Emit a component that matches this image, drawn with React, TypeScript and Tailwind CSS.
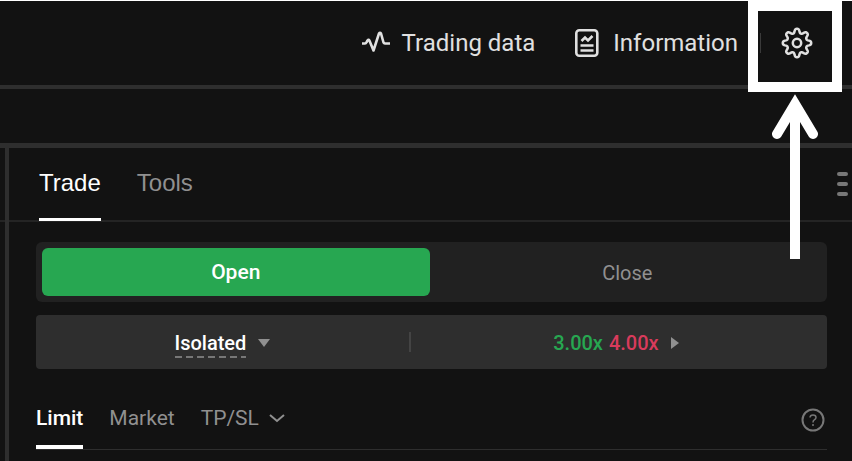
import { useState } from 'react';

const ORDER_TYPES = ['Limit', 'Market', 'TP/SL'];

// Wavy outline of the settings gear, eight rounded teeth
const gearPath = () => {
  const points: string[] = [];
  for (let i = 0; i < 160; i++) {
    const angle = (i / 160) * Math.PI * 2;
    const wave = Math.cos(angle * 8);
    const radius = 12.2 + 2.2 * Math.tanh(wave * 1.5);
    points.push(`${(16 + radius * Math.cos(angle)).toFixed(2)} ${(16 + radius * Math.sin(angle)).toFixed(2)}`);
  }
  return `M${points.join('L')}Z`;
};

function PulseIcon() {
  return (
    <svg width="28" height="24" viewBox="0 0 28 24" fill="none" stroke="currentColor" strokeWidth="2.6" strokeLinejoin="round">
      <path d="M0 12.500H3Q4 12.500 4.500 11.300L5.500 9.500Q6.700 8 7.600 10L11.500 19.500L17 2.500Q18 1 19 2.500L21.500 11.500Q21.900 12.500 23 12.500H28" />
    </svg>
  );
}

function ReportIcon() {
  return (
    <svg width="24" height="28" viewBox="0 0 24 28" fill="none" stroke="currentColor" strokeWidth="2.6">
      <rect x="1.300" y="1.300" width="21" height="25.400" rx="3" />
      <path d="M6.500 12L10 8.500L13 11.500L17.500 7" />
      <path d="M5.500 16.500H18.500M5.500 21.500H18.500" />
    </svg>
  );
}

function GearIcon() {
  return (
    <svg width="32" height="32" viewBox="0 0 32 32" fill="none" stroke="currentColor" strokeWidth="2.5" strokeLinejoin="round">
      <path d={gearPath()} />
      <circle cx="16" cy="16" r="4.200" />
    </svg>
  );
}

function Header() {
  return (
    <header className="flex h-[89px] items-center justify-end border-t border-b-4 border-t-white border-b-[#2e2e2e] pr-[39px] pb-px text-2xl text-[#e0e0e0]">
      <a href="#trading-data" className="flex items-center gap-3">
        <PulseIcon />
        Trading data
      </a>
      <a href="#information" className="ml-10 flex items-center gap-3.5">
        <ReportIcon />
        Information
      </a>
      <span className="ml-[22px] h-5 w-px bg-[#3a3a3a]" />
      <button type="button" aria-label="Settings" className="ml-5">
        <GearIcon />
      </button>
    </header>
  );
}

function PanelTabs() {
  return (
    <div className="flex h-[74px] items-stretch border-b-2 border-[#242424] pr-1 pl-[30px] font-['Liberation_Sans',Arial,sans-serif] text-2xl">
      <button type="button" className="-mb-px border-b-3 border-white text-white">Trade</button>
      <button type="button" className="ml-9 -mb-px border-b-3 border-transparent text-[#909090]">Tools</button>
      <button type="button" aria-label="Panel menu" className="ml-auto flex flex-col justify-center gap-1.5">
        <span className="h-1 w-[11px] rounded-xs bg-[#777]" />
        <span className="h-1 w-[11px] rounded-xs bg-[#777]" />
        <span className="h-1 w-[11px] rounded-xs bg-[#777]" />
      </button>
    </div>
  );
}

function OrderPanel() {
  const [side, setSide] = useState('Open');
  const [orderType, setOrderType] = useState('Limit');

  return (
    <div className="pt-5 pr-[25px] pl-[27px] text-[21px]">
      <div className="grid h-[60px] grid-cols-2 gap-1 rounded-md bg-[#212121] p-1.5">
        {['Open', 'Close'].map(name => (
          <button
            key={name}
            type="button"
            onClick={() => setSide(name)}
            className={side === name ? 'rounded-md bg-[#27a751] pt-0.5 font-medium text-white' : 'rounded-md pt-0.5 text-xl text-[#909090]'}
          >
            {name}
          </button>
        ))}
      </div>

      <div className="mt-[13px] flex h-[54px] items-center rounded-sm bg-[#2e2e2e] text-xl font-medium">
        <button type="button" className="flex flex-10 basis-0 items-center justify-center gap-3 pt-0.5 text-white">
          <span className="relative">
            Isolated
            <svg className="absolute -bottom-px left-0 w-full" height="2" stroke="#777" strokeWidth="2" strokeDasharray="7 4">
              <line x1="0" y1="1" x2="100%" y2="1" />
            </svg>
          </span>
          <svg width="12" height="8" fill="#909090"><path d="M0 0H12L6 8Z" /></svg>
        </button>
        <span className="h-5 w-0.5 bg-[#444]" />
        <button type="button" className="flex flex-11 basis-0 items-center justify-center pt-0.5 pr-1.5">
          <span className="text-[#27a751]">3.00x</span>
          <span className="ml-1.5 text-[#d93b5c]">4.00x</span>
          <svg className="ml-3" width="8" height="12" fill="#909090"><path d="M0 0L8 6L0 12Z" /></svg>
        </button>
      </div>

      <div className="mt-[18px] flex h-[63px] items-stretch gap-[26px] border-b border-[#2e2e2e]">
        {ORDER_TYPES.map(type => (
          <button
            key={type}
            type="button"
            onClick={() => setOrderType(type)}
            className={
              orderType === type
                ? 'border-b-4 border-white pt-1.5 font-medium text-white'
                : 'flex items-center gap-2.5 border-b-4 border-transparent pt-1.5 text-[#909090]'
            }
          >
            {type}
            {type === 'TP/SL' && (
              <svg width="16" height="10" fill="none" stroke="currentColor" strokeWidth="2"><path d="M1 1L8 7L15 1" /></svg>
            )}
          </button>
        ))}
        <button type="button" aria-label="Help" className="mr-0.5 ml-auto pt-1 text-[#777]">
          <svg width="24" height="24" fill="none" stroke="currentColor" strokeWidth="2">
            <circle cx="12" cy="12" r="10.500" />
            <path d="M9 9.500Q9.200 7 12 7Q15 7 15 9.500Q15 11 13.300 11.800Q12 12.500 12 14.500M12 16V18" strokeWidth="1.500" />
          </svg>
        </button>
      </div>
    </div>
  );
}

// Frame and arrow that point at the settings button
function SettingsCallout() {
  return (
    <div className="pointer-events-none absolute top-0 right-2.5 flex flex-col items-center">
      <div className="h-[92px] w-[94px] border-10 border-t-11 border-white" />
      <svg width="46" height="168" viewBox="0 0 46 168" fill="none" stroke="#fff" strokeWidth="10">
        <path d="M23 18V167" />
        <path d="M5 42L23 12L41 42" strokeLinecap="round" />
      </svg>
    </div>
  );
}

export default function App() {
  return (
    <div className="relative flex min-h-screen flex-col overflow-hidden bg-[#121212] font-[Roboto,sans-serif]">
      <Header />
      <div className="h-[59px] border-b-5 border-[#2e2e2e]" />
      <div className="flex flex-1">
        <div className="w-[5px]">
          <div className="h-[74px] border-b-2 border-[#242424]" />
        </div>
        <main className="flex-1 border-l-4 border-[#2e2e2e]">
          <PanelTabs />
          <OrderPanel />
        </main>
      </div>
      <SettingsCallout />
    </div>
  );
}
